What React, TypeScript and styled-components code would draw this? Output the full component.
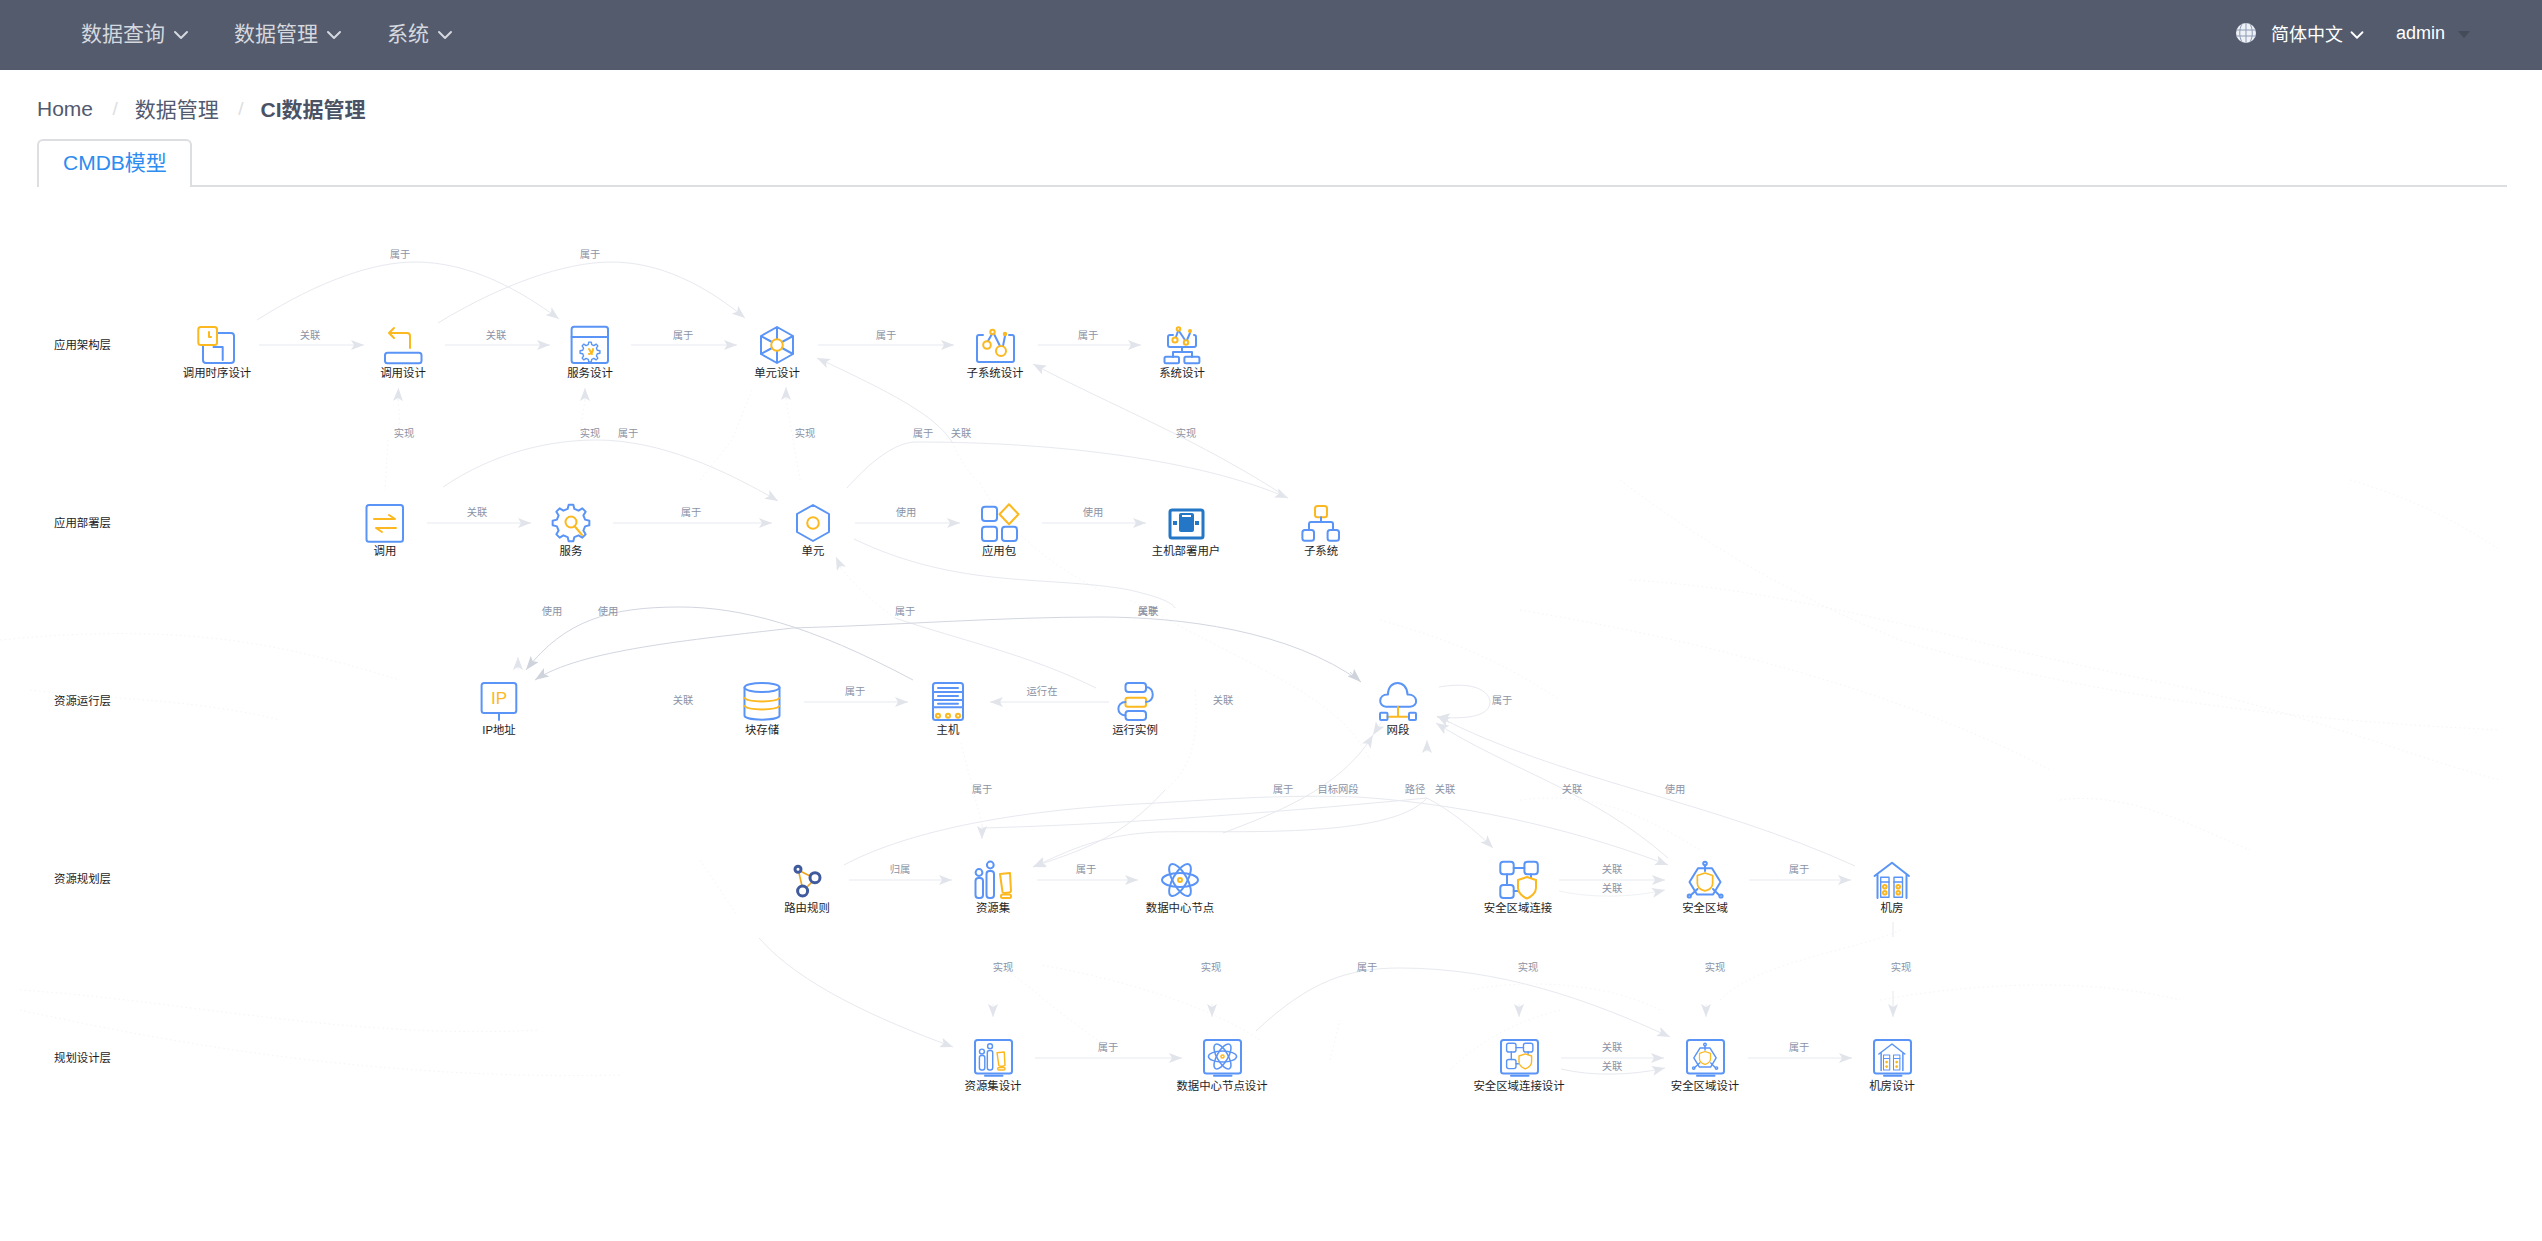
import React from "react";
import styled, { createGlobalStyle } from "styled-components";
import { ChevronDown } from "lucide-react";

const CANVAS_TOP = 187;
const LINE = "#e7e9ef";
const PALE = "#eff1f4";
const DARK = "#d2d6df";
const FAINT = "#f1f2f5";
const HAZE = "#f4f5f8";

const GlobalStyle = createGlobalStyle`
  html, body { margin: 0; padding: 0; background: #fff; }
  body { font-family: "Liberation Sans", "Noto Sans CJK SC", sans-serif; overflow: hidden; }
`;

const Page = styled.div`
  width: 2542px;
  height: 1241px;
  display: flex;
  flex-direction: column;
  background: #fff;
  overflow: hidden;
`;

const TopBar = styled.header`
  flex: none;
  height: 70px;
  padding: 0 72px 0 81px;
  box-sizing: border-box;
  background: #535b6d;
  display: flex;
  align-items: center;
  justify-content: space-between;
`;

const NavGroup = styled.nav`
  display: flex;
  align-items: center;
  margin-bottom: 7px;
`;

const RightGroup = styled.div`
  display: flex;
  align-items: center;
  margin-bottom: 4px;
`;

const NavItem = styled.div`
  display: flex;
  align-items: center;
  margin-right: 41px;
  font-size: 21px;
  color: #d5d8de;
  svg { margin: 7px 0 0 4px; }
`;

const LangItem = styled.div`
  display: flex;
  align-items: center;
  font-size: 18px;
  color: #fff;
  svg.chev { margin: 3px 0 0 3px; }
`;

const GlobeIcon = styled.svg`
  width: 20px;
  height: 20px;
  margin-right: 15px;
`;

const UserName = styled.div`
  margin-left: 28px;
  font-size: 18px;
  color: #fff;
`;

const Caret = styled.i`
  width: 0;
  height: 0;
  margin: 3px 0 0 13px;
  border-left: 6px solid transparent;
  border-right: 6px solid transparent;
  border-top: 7px solid #454b58;
`;

const Crumbs = styled.div`
  flex: none;
  margin: 24px 0 15px 37px;
  height: 30px;
  display: flex;
  align-items: center;
  font-size: 21px;
  color: #515a6e;
`;

const CrumbLink = styled.span`
  margin-bottom: 3px;
`;

const CrumbSep = styled.span`
  margin: 0 17px 0 19.5px;
  color: #dcdee2;
  font-size: 19px;
`;

const CrumbCurrent = styled.b`
  margin-bottom: 3px;
  font-weight: 700;
  color: #4a5263;
`;

const TabBar = styled.div`
  flex: none;
  height: 46px;
  margin: 0 35px 0 37px;
  border-bottom: 2px solid #dcdee2;
  display: flex;
`;

const Tab = styled.div`
  width: 155px;
  height: 48px;
  box-sizing: border-box;
  padding-left: 24px;
  border: 2px solid #dcdee2;
  border-bottom: 0;
  border-radius: 6px 6px 0 0;
  margin-bottom: -2px;
  background: #fff;
  color: #2d8cf0;
  font-size: 21px;
  line-height: 44px;
`;

const Canvas = styled.main`
  position: relative;
  flex: 1;
  overflow: hidden;
`;

const Wires = styled.svg`
  position: absolute;
  left: 0;
  top: 0;
  width: 2542px;
  height: 1054px;
`;

const NodeBox = styled.div.attrs<{ $x: number; $y: number }>((p) => ({
  style: { left: p.$x, top: p.$y - CANVAS_TOP - 30 },
}))<{ $x: number; $y: number }>`
  position: absolute;
  width: 120px;
  margin-left: -60px;
  display: flex;
  flex-direction: column;
  align-items: center;
`;

const NodeLabel = styled.div`
  height: 16px;
  line-height: 16px;
  font-size: 11.4px;
  color: #1d1d1f;
  white-space: nowrap;
`;

const LayerLabel = styled.div.attrs<{ $y: number }>((p) => ({
  style: { top: p.$y - CANVAS_TOP - 8 },
}))<{ $y: number }>`
  position: absolute;
  left: 54px;
  height: 16px;
  line-height: 16px;
  font-size: 11.4px;
  color: #1d1d1f;
  white-space: nowrap;
`;

const EdgeLabel = styled.div.attrs<{ $x: number; $y: number }>((p) => ({
  style: { left: p.$x, top: p.$y - CANVAS_TOP - 7 },
}))<{ $x: number; $y: number }>`
  position: absolute;
  transform: translateX(-50%);
  height: 14px;
  line-height: 14px;
  font-size: 10.3px;
  color: #8b93a5;
  white-space: nowrap;
`;

const IconSvg = styled.svg`
  width: 64px;
  height: 50px;
  overflow: visible;
  .b { fill: none; stroke: #5a94f6; stroke-width: 2; stroke-linejoin: round; stroke-linecap: round; }
  .t { fill: none; stroke: #5a94f6; stroke-width: 1.4; stroke-linejoin: round; stroke-linecap: round; }
  .y { fill: none; stroke: #fbb81f; stroke-width: 2; stroke-linejoin: round; stroke-linecap: round; }
  .yf { fill: #fbb81f; stroke: none; }
  .n { fill: none; stroke: #3f5a9d; stroke-width: 3; }
  .o { fill: none; stroke: #f0a31c; stroke-width: 1.6; }
  .d { fill: none; stroke: #2476c6; stroke-width: 3; }
  .df { fill: #2476c6; stroke: none; }
  .w { fill: #fff; stroke: none; }
  .ip { fill: #fbb81f; font-family: "Liberation Sans", sans-serif; font-size: 17px; font-weight: 400; }
`;

function gearPath(r1: number, r2: number, teeth: number) {
  const pts: string[] = [];
  const step = (Math.PI * 2) / teeth;
  for (let i = 0; i < teeth; i++) {
    const a = i * step - Math.PI / 2;
    const at = (ang: number, r: number) =>
      `${(Math.cos(ang) * r).toFixed(2)} ${(Math.sin(ang) * r).toFixed(2)}`;
    pts.push(`${i ? "L" : "M"}${at(a - step * 0.3, r1)}`);
    pts.push(`L${at(a - step * 0.16, r2)}`);
    pts.push(`L${at(a + step * 0.16, r2)}`);
    pts.push(`L${at(a + step * 0.3, r1)}`);
  }
  return pts.join(" ") + " Z";
}

const Shield = ({ s = 1, x = 0, y = 0 }: { s?: number; x?: number; y?: number }) => (
  <path
    className="y"
    transform={`translate(${x} ${y}) scale(${s})`}
    d="M0 -10 L9 -7 V2 C9 7 4 10 0 11 C-4 10 -9 7 -9 2 V-7 Z"
  />
);

const AtomShape = () => (
  <g>
    <ellipse className="b" cx="0" cy="0" rx="18" ry="7" />
    <ellipse className="b" cx="0" cy="0" rx="18" ry="7" transform="rotate(60)" />
    <ellipse className="b" cx="0" cy="0" rx="18" ry="7" transform="rotate(-60)" />
    <circle className="y" cx="0" cy="0" r="2" />
  </g>
);

const ResourceShape = () => (
  <g>
    <circle className="b" cx="-14" cy="-7.5" r="3.4" />
    <rect className="b" x="-17.5" y="-2" width="7.5" height="20" rx="3" />
    <circle className="b" cx="-2.7" cy="-15" r="3.4" />
    <rect className="b" x="-6.5" y="-9" width="7.5" height="27" rx="3" />
    <path className="y" d="M7 -6 L17 -7 L18 11 C18 13 10 13.5 9.5 12 Z" />
    <rect className="y" x="8" y="14.5" width="10" height="3.5" rx="1.5" />
  </g>
);

const ZoneLinkShape = () => (
  <g>
    <rect className="b" x="-17.7" y="-18.3" width="13.4" height="12.6" rx="3" />
    <rect className="b" x="6.4" y="-18.3" width="13.4" height="12.6" rx="3" />
    <rect className="b" x="-17.7" y="5" width="13.4" height="13" rx="3" />
    <path className="b" d="M-4.3 -12 H6.4 M-11 -5.7 V5 M13 -5.7 V-2 M-4.3 11 H0" />
    <path className="y" d="M9 -3 L18 0 V8 C18 13 13 17 9 18.5 C5 17 0 13 0 8 V0 Z" />
  </g>
);

const ZoneShape = () => (
  <g>
    <path className="b" d="M-7 -11.7 H7 L15.5 2 L8 14.5 H-8 L-15.5 2 Z" />
    <circle className="b" cx="0" cy="-16.5" r="1.8" />
    <path className="b" d="M0 -14.5 V-9 M-7.5 9 L-14.5 15.5 M8 9 L14.5 15.5" />
    <circle className="b" cx="-15.7" cy="16" r="1.6" />
    <circle className="b" cx="16" cy="16" r="1.6" />
    <Shield s={0.85} x={0} y={1.5} />
  </g>
);

const RoomShape = ({ dots = true }: { dots?: boolean }) => (
  <g>
    <path className="b" d="M-17.5 -4 L0 -17.3 L17 -4 M-14.5 -6 V18 M14.5 -6 V18" />
    <rect className="t" x="-11.3" y="-2.7" width="8.3" height="20" />
    <rect className="t" x="2" y="-2.7" width="8.5" height="20" />
    <path className="t" d="M-11.3 2 H-3 M2 2 H10.5" />
    <circle className={dots ? "y" : "yf"} cx="-7.2" cy="6.7" r="1.8" />
    <circle className={dots ? "y" : "yf"} cx="-7.2" cy="12.7" r="1.8" />
    <circle className={dots ? "y" : "yf"} cx="6.2" cy="6.7" r="1.8" />
    <circle className={dots ? "y" : "yf"} cx="6.2" cy="12.7" r="1.8" />
  </g>
);

const Frame: React.FC<{ children: React.ReactNode }> = ({ children }) => (
  <g>
    <rect className="b" x="-18" y="-18" width="37" height="33.5" rx="2.5" />
    <path className="b" d="M-8 17.8 H9.5" />
    {children}
  </g>
);

const icons: Record<string, React.ReactNode> = {
  seq: (
    <g>
      <path className="b" d="M1 -12 H14 Q17 -12 17 -9 V15 Q17 18 14 18 H-11 Q-14 18 -14 15 V1" />
      <path className="b" d="M-3.5 2 H5.7 V15" />
      <rect className="y" x="-18.7" y="-18" width="18.7" height="18" rx="2.5" />
      <path className="y" d="M-8 -13 V-8 H-6" />
    </g>
  ),
  call: (
    <g>
      <path className="y" d="M7 3 V-9 Q7 -12 4 -12 H-14 M-9 -17 L-14 -12 L-9 -7" />
      <rect className="b" x="-18" y="7.7" width="36.5" height="10.6" rx="2.5" />
    </g>
  ),
  serviceD: (
    <g>
      <rect className="b" x="-18.4" y="-18.3" width="36.4" height="36.3" rx="2.5" />
      <path className="b" d="M-18.4 -8 H18" />
      <path className="t" transform="translate(0 7)" d={gearPath(7.5, 10, 8)} />
      <path className="y" d="M-1 4 L2 9 M-1 9 Q3 8 3 4" />
    </g>
  ),
  unitD: (
    <g>
      <path className="b" d="M0 -18 L16 -9 V9 L0 18 L-16 9 V-9 Z M0 -18 V-6 M0 18 V6 M16 -9 L5 -3 M-16 -9 L-5 -3 M16 9 L5 3 M-16 9 L-5 3" />
      <circle className="y" cx="0" cy="0" r="5.8" />
    </g>
  ),
  subD: (
    <g>
      <path className="b" d="M-12 -10 H-16 Q-18 -10 -18 -8 V15 Q-18 17 -16 17 H17 Q19 17 19 15 V-8 Q19 -10 17 -10 H14 M-7 -4 L-3 -11 M-1 -11 L5 1 M8 1 L10 -9" />
      <circle className="y" cx="-8" cy="0" r="3.8" />
      <circle className="y" cx="-2.5" cy="-13" r="2.2" />
      <circle className="y" cx="6" cy="6" r="5" />
      <circle className="yf" cx="10" cy="-11" r="2.2" />
    </g>
  ),
  sysD: (
    <g>
      <path className="b" d="M-9 -10 H-12 Q-14 -10 -14 -8 V0 Q-14 2 -12 2 H12 Q14 2 14 0 V-8 Q14 -10 12 -10 M-6 -8 L-4 -14 M-3 -14 L3 -5 M5 -5 L8 -12 M0 2 V7 M-9 12 V7 H10 V12" />
      <rect className="b" x="-17.5" y="11.7" width="14.5" height="6.6" rx="1.5" />
      <rect className="b" x="2.4" y="11.7" width="15" height="6.6" rx="1.5" />
      <circle className="y" cx="-7" cy="-5" r="2.6" />
      <circle className="y" cx="-3.5" cy="-16" r="1.8" />
      <circle className="y" cx="4" cy="-2.5" r="2.2" />
      <circle className="yf" cx="8" cy="-14" r="2" />
    </g>
  ),
  invoke: (
    <g>
      <rect className="b" x="-18.5" y="-18" width="36.5" height="36.7" rx="2.5" />
      <path className="y" d="M-11 -4 H10 L4 -8 M11 5 H-9 L-3 9" />
    </g>
  ),
  service: (
    <g>
      <path className="b" d={gearPath(14.5, 18.5, 8)} />
      <circle className="y" cx="0" cy="-1" r="5.5" />
      <path className="y" d="M3.5 3 L11 12" />
    </g>
  ),
  unit: (
    <g>
      <path className="b" d="M0 -18 L16 -9 V9 L0 18 L-16 9 V-9 Z" />
      <circle className="y" cx="0" cy="0" r="5.8" />
    </g>
  ),
  pkg: (
    <g>
      <rect className="b" x="-17" y="-16.3" width="15" height="14.3" rx="3" />
      <rect className="b" x="-17" y="3.7" width="15" height="14.3" rx="3" />
      <rect className="b" x="3" y="3.7" width="15" height="14.3" rx="3" />
      <path className="y" d="M10 -18.7 L19.5 -8.7 L10 1.3 L0.5 -8.7 Z" />
    </g>
  ),
  hostUser: (
    <g>
      <rect className="d" x="-16" y="-13" width="33" height="28" rx="2" />
      <rect className="df" x="-7" y="-10" width="15" height="19" rx="2" />
      <rect className="w" x="-4" y="-8" width="9" height="2" />
      <rect className="df" x="-13" y="-2" width="4" height="4" />
      <rect className="df" x="9" y="-2" width="4" height="4" />
    </g>
  ),
  sub: (
    <g>
      <rect className="y" x="-6" y="-17" width="12" height="11.3" rx="2.5" />
      <path className="b" d="M0 -5.7 V-1 M-12 6 V1 Q-12 -1 -10 -1 H10 Q12 -1 12 1 V6" />
      <rect className="b" x="-18.6" y="7" width="11.6" height="10.7" rx="2.5" />
      <rect className="b" x="6.6" y="7" width="11.4" height="10.7" rx="2.5" />
    </g>
  ),
  ip: (
    <g>
      <rect className="b" x="-17.4" y="-19" width="34.7" height="30" rx="2.5" />
      <path className="b" d="M0 11 V18" />
      <text className="ip" x="0" y="2" textAnchor="middle">IP</text>
    </g>
  ),
  disk: (
    <g>
      <ellipse className="b" cx="0" cy="-14.5" rx="17.5" ry="4.5" />
      <path className="b" d="M-17.5 -14.5 V13.5 C-17.5 19 17.5 19 17.5 13.5 V-14.5" />
      <path className="y" d="M-17.5 -4 C-14 0.5 14 0.5 17.5 -4 M-17.5 4 C-14 8.5 14 8.5 17.5 4" />
    </g>
  ),
  host: (
    <g>
      <rect className="b" x="-15" y="-19" width="30" height="37" rx="2.5" />
      <path className="b" d="M-15 -10 H15 M-15 -2 H15 M-15 5.3 H15" />
      <path className="b" d="M-10 -14 H10 M-10 -6 H10 M-10 1.8 H10" />
      <circle className="y" cx="-10" cy="13.7" r="2" />
      <circle className="y" cx="0" cy="13.7" r="2" />
      <circle className="y" cx="10" cy="13.7" r="2" />
    </g>
  ),
  run: (
    <g>
      <rect className="b" x="-9.5" y="-19" width="20.5" height="9" rx="3" />
      <rect className="y" x="-9.5" y="-4.3" width="20.5" height="9" rx="2" />
      <rect className="b" x="-9.5" y="9" width="20.5" height="9" rx="3" />
      <path className="b" d="M11 -15 C20 -15 20 0 11 0 M-9.5 0 C-19 0 -19 13.5 -9.5 13.5" />
    </g>
  ),
  cloud: (
    <g>
      <path className="b" d="M-12 4.7 C-20 4.7 -20 -8 -10 -7.5 C-10 -23 9 -23 9.5 -7.5 C20 -8 21 4.7 12 4.7 Z" />
      <path className="y" d="M0 4.7 V14.7 M-10.5 14.7 H11" />
      <rect className="b" x="-18" y="10.7" width="7.5" height="7.3" rx="1" />
      <rect className="b" x="11" y="10.7" width="7" height="7.3" rx="1" />
    </g>
  ),
  route: (
    <g>
      <path className="o" d="M-7 -9 L3 -4 M-8 -7 L-5 6 M-1 8 L5 2" />
      <circle className="n" cx="-9" cy="-10.7" r="3" />
      <circle className="n" cx="8" cy="-2.3" r="5" />
      <circle className="n" cx="-4.4" cy="11" r="5" />
    </g>
  ),
  resource: <ResourceShape />,
  atom: <AtomShape />,
  zoneLink: <ZoneLinkShape />,
  zone: <ZoneShape />,
  room: <RoomShape />,
  resourceD: (
    <Frame>
      <g transform="translate(-1 -1) scale(0.72)"><ResourceShape /></g>
    </Frame>
  ),
  atomD: (
    <Frame>
      <g transform="translate(0.5 -1.5) scale(0.78)"><AtomShape /></g>
    </Frame>
  ),
  zoneLinkD: (
    <Frame>
      <g transform="translate(0 -2) scale(0.7)"><ZoneLinkShape /></g>
    </Frame>
  ),
  zoneD: (
    <Frame>
      <g transform="translate(0 -1.5) scale(0.72)"><ZoneShape /></g>
    </Frame>
  ),
  roomD: (
    <Frame>
      <g transform="translate(0 -1) scale(0.75)"><RoomShape dots={false} /></g>
    </Frame>
  ),
};

const layers: [string, number][] = [
  ["应用架构层", 345],
  ["应用部署层", 523],
  ["资源运行层", 701],
  ["资源规划层", 879],
  ["规划设计层", 1058],
];

const nodes: [string, string, number, number][] = [
  ["调用时序设计", "seq", 217, 345],
  ["调用设计", "call", 403, 345],
  ["服务设计", "serviceD", 590, 345],
  ["单元设计", "unitD", 777, 345],
  ["子系统设计", "subD", 995, 345],
  ["系统设计", "sysD", 1182, 345],
  ["调用", "invoke", 385, 523],
  ["服务", "service", 571, 523],
  ["单元", "unit", 813, 523],
  ["应用包", "pkg", 999, 523],
  ["主机部署用户", "hostUser", 1186, 523],
  ["子系统", "sub", 1321, 523],
  ["IP地址", "ip", 499, 702],
  ["块存储", "disk", 762, 702],
  ["主机", "host", 948, 702],
  ["运行实例", "run", 1135, 702],
  ["网段", "cloud", 1398, 702],
  ["路由规则", "route", 807, 880],
  ["资源集", "resource", 993, 880],
  ["数据中心节点", "atom", 1180, 880],
  ["安全区域连接", "zoneLink", 1518, 880],
  ["安全区域", "zone", 1705, 880],
  ["机房", "room", 1892, 880],
  ["资源集设计", "resourceD", 993, 1058],
  ["数据中心节点设计", "atomD", 1222, 1058],
  ["安全区域连接设计", "zoneLinkD", 1519, 1058],
  ["安全区域设计", "zoneD", 1705, 1058],
  ["机房设计", "roomD", 1892, 1058],
];

const edgeLabels: [string, number, number][] = [
  ["关联", 310, 336], ["关联", 496, 336], ["属于", 683, 336], ["属于", 886, 336], ["属于", 1088, 336],
  ["属于", 400, 255], ["属于", 590, 255],
  ["实现", 404, 434], ["实现", 590, 434], ["属于", 628, 434], ["实现", 805, 434], ["属于", 923, 434], ["关联", 961, 434], ["实现", 1186, 434],
  ["关联", 477, 513], ["属于", 691, 513], ["使用", 906, 513], ["使用", 1093, 513],
  ["使用", 552, 612], ["使用", 608, 612], ["属于", 905, 612], ["属于", 1148, 612], ["关联", 1148, 612],
  ["关联", 683, 701], ["属于", 855, 692], ["运行在", 1042, 692], ["关联", 1223, 701], ["属于", 1502, 701],
  ["属于", 982, 790], ["属于", 1283, 790], ["目标网段", 1338, 790], ["路径", 1415, 790], ["关联", 1445, 790], ["关联", 1572, 790], ["使用", 1675, 790],
  ["归属", 900, 870], ["属于", 1086, 870], ["关联", 1612, 870], ["关联", 1612, 889], ["属于", 1799, 870],
  ["实现", 1003, 968], ["实现", 1211, 968], ["属于", 1367, 968], ["实现", 1528, 968], ["实现", 1715, 968], ["实现", 1901, 968],
  ["属于", 1108, 1048], ["关联", 1612, 1048], ["关联", 1612, 1067], ["属于", 1799, 1048],
];

// from x, from y, to x, to y, colour, width
const straight: [number, number, number, number, string, number][] = [
  [259, 345, 364, 345, LINE, 1], [445, 345, 550, 345, LINE, 1], [631, 345, 737, 345, LINE, 1], [818, 345, 954, 345, LINE, 1], [1038, 345, 1141, 345, LINE, 1],
  [427, 523, 531, 523, LINE, 1], [613, 523, 772, 523, LINE, 1], [855, 523, 960, 523, LINE, 1], [1042, 523, 1146, 523, LINE, 1],
  [804, 702, 908, 702, LINE, 1], [1109, 702, 990, 702, LINE, 1],
  [849, 880, 952, 880, PALE, 1.6], [1037, 880, 1138, 880, PALE, 1.6], [1559, 880, 1665, 880, PALE, 1.6], [1749, 880, 1851, 880, PALE, 1.6],
  [1035, 1058, 1182, 1058, LINE, 1], [1561, 1058, 1664, 1058, LINE, 1], [1748, 1058, 1852, 1058, LINE, 1],
];

// path, colour, has an arrow head
const curves: [string, string, boolean][] = [
  ["M257 320 C320 280 375 262 415 262 C470 262 520 290 559 319", LINE, true],
  ["M438 323 C500 285 565 262 611 262 C660 262 705 285 745 318", LINE, true],
  ["M443 487 C495 452 550 440 597 440 C660 440 725 470 778 501", LINE, true],
  ["M847 488 C870 462 895 442 916 442 C1060 442 1200 460 1288 498", LINE, true],
  ["M952 442 C935 415 890 392 817 358", LINE, true],
  ["M1288 498 C1200 440 1110 405 1033 364", LINE, true],
  ["M1096 688 C1030 655 960 640 895 618", LINE, false],
  ["M854 539 C960 590 1050 575 1130 590 C1150 595 1170 600 1175 608", LINE, false],
  ["M913 680 C810 625 740 607 680 607 C610 607 565 620 526 670", DARK, true],
  ["M1361 682 C1290 630 1180 617 1100 617 C1000 617 900 625 793 628 C690 640 580 650 535 680", DARK, true],
  ["M1439 687 C1480 680 1490 695 1490 702 C1490 715 1470 720 1437 717", LINE, true],
  ["M1668 858 C1590 790 1510 770 1436 723", LINE, true],
  ["M1855 866 C1710 800 1560 780 1437 716", LINE, true],
  ["M1223 833 C1270 815 1340 790 1373 735", LINE, true],
  ["M844 865 C900 835 1000 810 1157 803 C1250 797 1300 795 1358 797 C1480 805 1590 835 1668 865", LINE, true],
  ["M982 828 C1100 825 1250 815 1427 798 C1450 810 1475 830 1493 848", LINE, true],
  ["M1427 798 C1390 840 1230 830 1157 832 C1100 835 1070 850 1033 867", LINE, true],
  ["M1165 790 C1120 840 1080 850 1033 867", LINE, true],
  ["M759 938 C800 985 880 1020 953 1047", LINE, true],
  ["M1559 891 C1590 898 1630 898 1665 890", PALE, true],
  ["M1561 1069 C1590 1076 1630 1076 1665 1068", LINE, true],
  ["M1256 1031 C1310 980 1350 968 1400 968 C1500 968 1590 1000 1670 1037", LINE, true],
  ["M1893 922 V937", LINE, false],
  ["M1893 991 V1017", LINE, true],
];

const stubs: [number, number, number, number, string][] = [
  [398, 400, 398.5, 388, FAINT], [585, 400, 585, 388, FAINT], [786, 399, 786, 387, FAINT],
  [518, 670, 518, 657, FAINT], [1427, 752, 1427, 740, FAINT], [982, 824, 982, 839, FAINT],
  [993, 1004, 993, 1017, FAINT], [1212, 1004, 1212, 1017, FAINT], [1519, 1004, 1519, 1017, FAINT], [1706, 1004, 1706, 1017, FAINT],
  [1384, 718, 1373, 735, FAINT], [841, 568, 836, 557, FAINT], [1350, 672, 1361, 682, DARK],
];

const haze: string[] = [
  "M398 400 L400 425", "M388 440 L385 490", "M585 400 L580 430", "M786 399 L800 480", "M752 390 L732 440 L700 480",
  "M952 442 C960 460 970 475 980 483", "M980 483 C1000 520 1040 560 1100 590", "M895 618 C870 600 850 580 841 568",
  "M961 743 L982 824", "M1195 690 C1200 740 1190 770 1165 790", "M700 860 L737 915",
  "M1630 580 C1800 590 1950 640 2150 680 C2300 710 2420 760 2500 780", "M1520 610 C1700 640 1900 690 2050 770",
  "M1620 480 C1700 540 1780 590 1900 640 C2100 700 2300 720 2500 730", "M2350 480 C2420 500 2470 530 2500 550",
  "M1520 800 C1600 790 1650 820 1700 850", "M2060 800 C2130 790 2200 830 2250 850",
  "M1380 620 C1450 640 1500 660 1560 700", "M20 1010 C200 1050 400 1080 620 1075", "M20 990 C180 1000 350 1040 540 1030",
  "M30 690 C120 700 200 700 280 720", "M0 640 C200 620 300 650 400 680", "M1720 1000 C1760 960 1860 950 1900 930",
  "M1880 1000 C1990 980 2100 980 2180 1000", "M1260 1040 C1200 1000 1100 975 1040 965", "M1330 1060 L1340 1020", "M1560 1010 C1520 1020 1480 1040 1450 1070",
  "M1130 600 C1280 680 1340 700 1370 760", "M1660 1010 C1600 980 1520 980 1470 990", "M1105 1045 C1060 1015 1035 990 1000 965",
];

const Globe = () => (
  <GlobeIcon viewBox="0 0 20 20">
    <circle cx="10" cy="10" r="10" fill="#eef1f6" />
    <path
      d="M0.5 7 H19.5 M0.5 13 H19.5 M10 0 V20 M6 1 C3 6 3 14 6 19 M14 1 C17 6 17 14 14 19"
      fill="none"
      stroke="#8d9ab4"
      strokeWidth="1"
    />
  </GlobeIcon>
);

export default function App() {
  return (
    <Page>
      <GlobalStyle />
      <TopBar>
        <NavGroup>
          <NavItem>数据查询<ChevronDown size={24} strokeWidth={2} /></NavItem>
          <NavItem>数据管理<ChevronDown size={24} strokeWidth={2} /></NavItem>
          <NavItem>系统<ChevronDown size={24} strokeWidth={2} /></NavItem>
        </NavGroup>
        <RightGroup>
          <LangItem>
            <Globe />
            简体中文
            <ChevronDown className="chev" size={22} strokeWidth={2} />
          </LangItem>
          <UserName>admin</UserName>
          <Caret />
        </RightGroup>
      </TopBar>
      <Crumbs>
        Home<CrumbSep>/</CrumbSep><CrumbLink>数据管理</CrumbLink><CrumbSep>/</CrumbSep><CrumbCurrent>CI数据管理</CrumbCurrent>
      </Crumbs>
      <TabBar>
        <Tab>CMDB模型</Tab>
      </TabBar>
      <Canvas>
        <Wires viewBox={`0 ${CANVAS_TOP} 2542 1054`}>
          <defs>
            <marker id="arrow" viewBox="0 0 13 10" refX="13" refY="5" markerUnits="userSpaceOnUse" markerWidth="13" markerHeight="10" orient="auto">
              <path d="M0 0 L13 5 L0 10 L3 5 Z" fill="#e1e4ea" />
            </marker>
            <marker id="arrowDark" viewBox="0 0 14 10" refX="14" refY="5" markerUnits="userSpaceOnUse" markerWidth="14" markerHeight="10" orient="auto">
              <path d="M0 0 L14 5 L0 10 L3 5 Z" fill="#cfd3db" />
            </marker>
          </defs>
          {haze.map((d, i) => (
            <path key={i} d={d} fill="none" stroke={HAZE} strokeWidth="1" strokeDasharray="1.5 3" />
          ))}
          {straight.map(([a, b, c, d, color, w], i) => (
            <path key={i} d={`M${a} ${b} L${c} ${d}`} fill="none" stroke={color} strokeWidth={w} markerEnd="url(#arrow)" />
          ))}
          {curves.map(([d, color, head], i) => (
            <path
              key={i}
              d={d}
              fill="none"
              stroke={color}
              markerEnd={head ? (color === DARK ? "url(#arrowDark)" : "url(#arrow)") : undefined}
            />
          ))}
          {stubs.map(([a, b, c, d, color], i) => (
            <path key={i} d={`M${a} ${b} L${c} ${d}`} fill="none" stroke={color} markerEnd={color === DARK ? "url(#arrowDark)" : "url(#arrow)"} />
          ))}
        </Wires>
        {layers.map(([t, y]) => (
          <LayerLabel key={t} $y={y}>{t}</LayerLabel>
        ))}
        {edgeLabels.map(([t, x, y], i) => (
          <EdgeLabel key={i} $x={x} $y={y}>{t}</EdgeLabel>
        ))}
        {nodes.map(([t, icon, x, y]) => (
          <NodeBox key={t} $x={x} $y={y}>
            <IconSvg viewBox="-32 -30 64 50">{icons[icon]}</IconSvg>
            <NodeLabel>{t}</NodeLabel>
          </NodeBox>
        ))}
      </Canvas>
    </Page>
  );
}
